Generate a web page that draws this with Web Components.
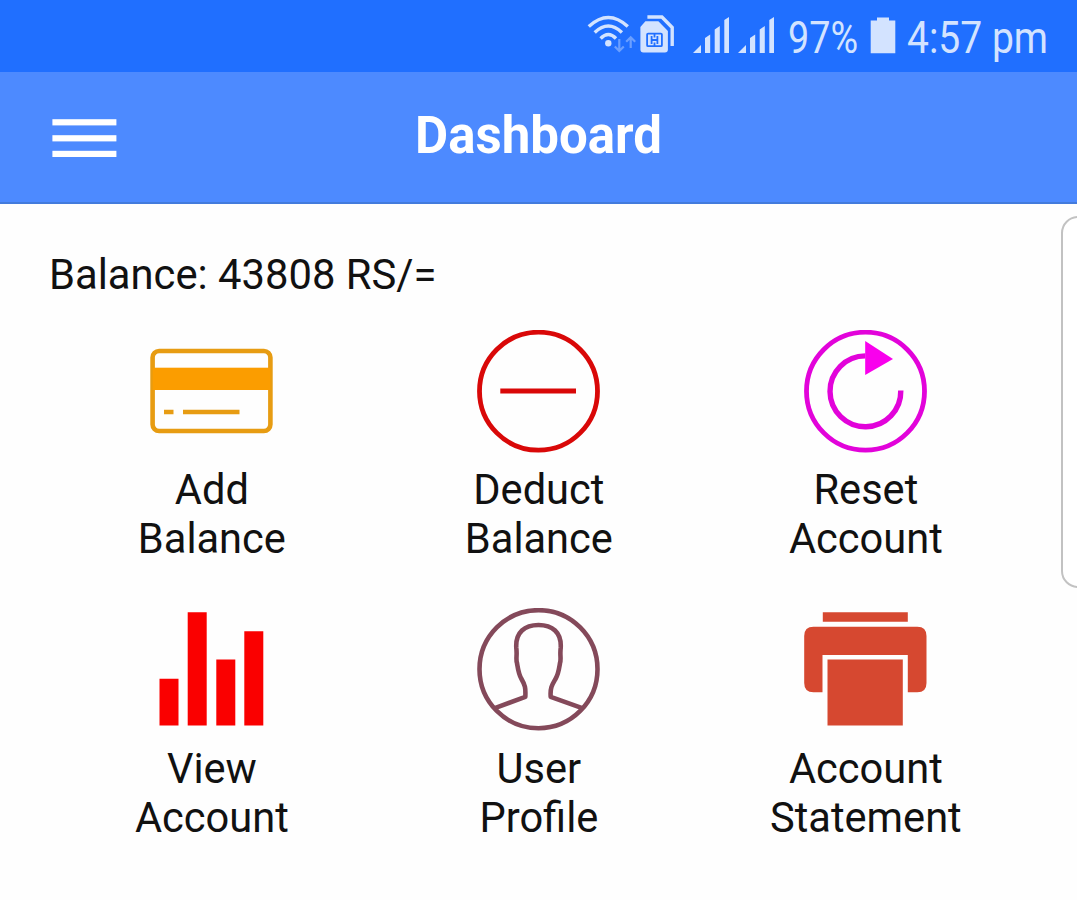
<!DOCTYPE html>
<html lang="en">
<head>
<meta charset="utf-8">
<title>Dashboard</title>
<style>
    body {
        margin: 0;
        background: #fefefe;
        font-family: Roboto, "Liberation Sans", sans-serif;
        color: #111;
        overflow: hidden;
    }
</style>
</head>
<body>
<app-screen>
    <status-bar slot="top" battery="97%" time="4:57 pm"></status-bar>
    <app-header slot="top">Dashboard</app-header>
    <account-balance>Balance: 43808 RS/=</account-balance>
    <menu-grid>
        <menu-tile icon="card">Add<br>Balance</menu-tile>
        <menu-tile icon="minus">Deduct<br>Balance</menu-tile>
        <menu-tile icon="reset">Reset<br>Account</menu-tile>
        <menu-tile icon="bars">View<br>Account</menu-tile>
        <menu-tile icon="user">User<br>Profile</menu-tile>
        <menu-tile icon="printer">Account<br>Statement</menu-tile>
    </menu-grid>
    <edge-handle slot="edge"></edge-handle>
</app-screen>

<template id="screen">
    <style>
        :host {
            display: flex;
            flex-direction: column;
            position: relative;
            width: 1077px;
            height: 900px;
            overflow: hidden;
        }

        main {
            padding: 46px 48.4px 0;
        }
    </style>
    <slot name="top"></slot>
    <main><slot></slot></main>
    <slot name="edge"></slot>
</template>

<template id="status">
    <style>
        :host {
            display: flex;
            justify-content: flex-end;
            height: 72px;
            padding-right: 29px;
            background: #206fff;
            color: #d3e3ff;
        }

        svg {
            display: block;
            height: 72px;
            fill: currentColor;
            overflow: visible;
        }

        .sim { margin-left: 2px; }
        .signal { margin-left: 17px; }
        .signal + .signal { margin-left: 8px; }
        .percent { margin-left: 12px; }
        .battery { margin-left: 12px; }
        .time { margin-left: 11px; }

        text {
            font-size: 45px;
        }
    </style>
    <svg class="wifi" width="50" viewBox="586 0 50 72">
        <g fill="none" stroke="currentColor" stroke-width="3.4">
            <path d="M587.8 26.5Q607.3 8.5 626.8 26.5"/>
            <path d="M593.7 32.5Q607.3 19.5 620.9 32.5"/>
            <path d="M599.6 38.5Q607.3 30.5 615 38.5"/>
        </g>
        <circle cx="607.3" cy="43.2" r="3.2"/>
        <g fill="none" stroke="currentColor" stroke-width="2.2" opacity=".42">
            <path d="M618.3 39V51M613.8 46.5L618.3 51L622.8 46.5"/>
            <path d="M629.7 48V37M625.2 41.8L629.7 37.3L634.2 41.8"/>
        </g>
    </svg>
    <svg class="sim" width="36" viewBox="638.6 0 36 72">
        <path d="M647 17H661.5L671.8 27.5V46" fill="none" stroke="currentColor" stroke-width="3.4"/>
        <path d="M645 21.3H658L667.5 31V49.5Q667.5 52.5 664.5 52.5H643Q640 52.5 640 49.5V27Z"/>
        <g fill="none" stroke="#206fff" stroke-width="1.8">
            <rect x="646.7" y="33.6" width="14.8" height="12.6" rx="1"/>
            <path d="M651.2 36V44M657 36V44M651.2 40H657M654.1 34V37.5M654.1 42.5V46"/>
        </g>
    </svg>
    <svg class="signal" width="37" viewBox="691 0 37 72">
        <path d="M692 53L700 45V53ZM704 38L709.2 34.5V53H704ZM713.7 29.5L718.8 26V53H713.7ZM723.3 20L728 17V53H723.3Z"/>
    </svg>
    <svg class="signal" width="39" viewBox="737 0 39 72">
        <path d="M738 53L746 45V53ZM750 38L755.2 34.5V53H750ZM759.7 29.5L764.8 26V53H759.7ZM769.3 20L774 17V53H769.3Z"/>
    </svg>
    <svg class="percent" width="70" viewBox="0 0 70 72">
        <text x="0" y="52.5" textLength="70" lengthAdjust="spacingAndGlyphs"></text>
    </svg>
    <svg class="battery" width="26" viewBox="870 0 26 72">
        <path d="M877 17.5H889V20.5H895.3V53.3H870.7V20.5H877Z"/>
    </svg>
    <svg class="time" width="141" viewBox="0 0 141 72">
        <text x="0" y="52.5" textLength="141" lengthAdjust="spacingAndGlyphs"></text>
    </svg>
</template>

<template id="header">
    <style>
        :host {
            display: grid;
            grid-template-columns: 65px 1fr 65px;
            align-items: center;
            box-sizing: border-box;
            height: 132px;
            padding: 1px 52px 0;
            background: #4d8aff;
            border-bottom: 2px solid #437bdc;
            color: #fff;
        }

        svg {
            display: block;
            fill: #fff;
        }

        h1 {
            margin: 0;
            padding-bottom: 3px;
            font-size: 51px;
            line-height: 60px;
            font-weight: 700;
            text-align: center;
            white-space: nowrap;
        }
    </style>
    <svg width="65" height="40" viewBox="0 0 65 40">
        <rect x=".4" y="1.2" width="64" height="6.2"/>
        <rect x=".4" y="17.2" width="64" height="6.2"/>
        <rect x=".4" y="32.8" width="64" height="6.2"/>
    </svg>
    <h1><slot></slot></h1>
</template>

<template id="balance">
    <style>
        :host {
            display: block;
            padding-left: .6px;
            font-size: 41.75px;
            line-height: 50px;
            white-space: nowrap;
        }
    </style>
    <slot></slot>
</template>

<template id="grid">
    <style>
        :host {
            display: grid;
            grid-template-columns: repeat(3, 327px);
            row-gap: 45px;
            padding-top: 30px;
        }
    </style>
    <slot></slot>
</template>

<template id="tile">
    <style>
        :host {
            display: flex;
            flex-direction: column;
            align-items: center;
            gap: 12.4px;
            font-size: 41.6px;
            line-height: 49px;
            text-align: center;
        }

        svg {
            display: block;
            width: 123px;
            height: 123px;
        }
    </style>
    <svg viewBox="0 0 123 123"></svg>
    <div class="label"><slot></slot></div>
</template>

<template id="edge">
    <style>
        :host {
            position: absolute;
            top: 216px;
            right: -22px;
            width: 34px;
            height: 368px;
            border: 2px solid #c2c2c2;
            border-radius: 17px;
            background: #fff;
        }
    </style>
</template>

<script>
    (function (window, document) {

        const ICONS = {
            card: `
                <rect x="2.6" y="21" width="117.8" height="80" rx="6.5" fill="none" stroke="#e79c12" stroke-width="4.6"/>
                <rect x="2.6" y="37.7" width="117.8" height="22.3" fill="#fb9d00"/>
                <path d="M14 82H23.5M33 82H89.5" stroke="#e79c12" stroke-width="4.4"/>`,
            minus: `
                <circle cx="61.5" cy="61.2" r="59" fill="none" stroke="#d90808" stroke-width="4.8"/>
                <path d="M23.3 61H99" stroke="#d90808" stroke-width="5.2"/>`,
            reset: `
                <circle cx="61.5" cy="61.2" r="59" fill="none" stroke="#e203da" stroke-width="4.8"/>
                <path d="M96.8 60.5A35.4 35.4 0 1 1 61.4 25.9" fill="none" stroke="#e203da" stroke-width="5.4"/>
                <path d="M61.2 11L89 29L61.2 45Z" fill="#f900ed"/>`,
            bars: `
                <path d="M9.5 70.7h19v46.8h-19ZM37.7 4.3h19v113.2h-19ZM66.3 51.5h19v66h-19ZM94.3 23.3h19v94.2h-19Z" fill="#fa0000"/>`,
            user: `
                <circle cx="61.5" cy="61.2" r="59" fill="none" stroke="#84495a" stroke-width="4.6"/>
                <path d="M18.5 99.8L48.3 88.8C48.8 80 48 77 44.5 71C41.5 66 41 61 40 55C38.6 51 40.3 47 39.3 40C38.3 24 48 17 61.5 17C75 17 84.7 24 83.7 40C82.7 47 84.4 51 83 55C82 61 81.5 66 78.5 71C75 77 73 80 73.7 88.8L104.5 99.8" fill="none" stroke="#84495a" stroke-width="4.6" stroke-linejoin="round"/>`,
            printer: `
                <path d="M18.8 4.2H103.8V13.7H18.8ZM9.5 18.7H113.3Q122.5 18.7 122.5 28V75Q122.5 84.3 113.3 84.3H103.8V47H18.5V84.3H9.5Q.2 84.3 .2 75V28Q.2 18.7 9.5 18.7ZM23.5 51.4H98.8V117.4H23.5Z" fill="#d64830"/>`
        };

        class BaseElement extends HTMLElement {
            constructor(templateId) {
                super();
                this.shadowDom = this.attachShadow({mode: 'open'});
                this.shadowDom.appendChild(document.getElementById(templateId).content.cloneNode(true));
            }
        }

        class AppScreen extends BaseElement {
            constructor() { super('screen'); }
        }

        class StatusBar extends BaseElement {
            constructor() { super('status'); }

            connectedCallback() {
                this.shadowDom.querySelector('.percent text').textContent = this.getAttribute('battery');
                this.shadowDom.querySelector('.time text').textContent = this.getAttribute('time');
            }
        }

        class AppHeader extends BaseElement {
            constructor() { super('header'); }
        }

        class AccountBalance extends BaseElement {
            constructor() { super('balance'); }
        }

        class MenuGrid extends BaseElement {
            constructor() { super('grid'); }
        }

        class MenuTile extends BaseElement {
            constructor() { super('tile'); }

            connectedCallback() {
                this.shadowDom.querySelector('svg').innerHTML = ICONS[this.getAttribute('icon')] || '';
            }
        }

        class EdgeHandle extends BaseElement {
            constructor() { super('edge'); }
        }

        window.customElements.define('app-screen', AppScreen);
        window.customElements.define('status-bar', StatusBar);
        window.customElements.define('app-header', AppHeader);
        window.customElements.define('account-balance', AccountBalance);
        window.customElements.define('menu-grid', MenuGrid);
        window.customElements.define('menu-tile', MenuTile);
        window.customElements.define('edge-handle', EdgeHandle);
    })(window, document);
</script>
</body>
</html>
